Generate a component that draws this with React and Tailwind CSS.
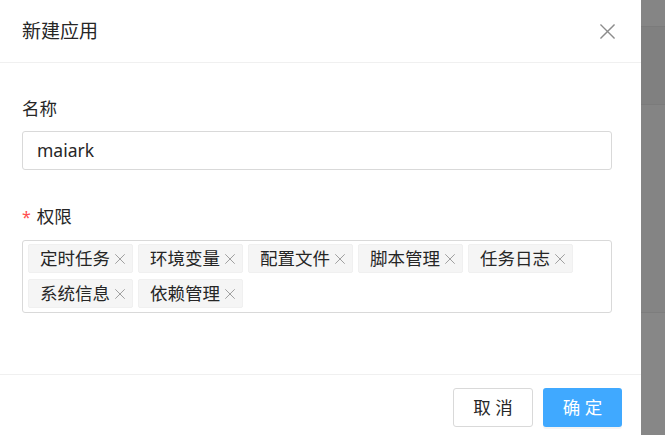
import React from "react";

const perms = ["定时任务", "环境变量", "配置文件", "脚本管理", "任务日志", "系统信息", "依赖管理"];

const font = { fontFamily: '"Noto Sans", "Noto Sans CJK SC", sans-serif' };

const CloseIcon = ({ size = 15, stroke = 1.5 }) => (
  <svg width={size} height={size} viewBox="0 0 16 16" fill="none">
    <path d="M1 1L15 15M15 1L1 15" stroke="#8c8c8c" strokeWidth={stroke} strokeLinecap="square" />
  </svg>
);

const Tag = ({ label }) => (
  <span className="flex items-center h-[29px] pl-[11px] pr-[7px] bg-[#f5f5f5] border border-[#f0f0f0] rounded-[2px] text-[17.5px] leading-none text-[#262626]">
    {label}
    <span className="ml-[5px] flex items-center">
      <CloseIcon size={10} stroke={1.3} />
    </span>
  </span>
);

const App = () => {
  return (
    <div className="flex w-[665px] h-[435px] overflow-hidden bg-white" style={font}>
      <div className="w-[641px] h-full flex flex-col bg-white">
        <div className="h-[63px] shrink-0 flex items-center justify-between pl-[22px] pr-[26px] border-b border-[#f0f0f0]">
          <span className="text-[19px] text-[#262626]">新建应用</span>
          <CloseIcon />
        </div>

        <div className="flex-1 px-[22px] pt-[32px]">
          <div className="h-[27px] flex items-center text-[17.5px] text-[#262626]">名称</div>
          <div className="mt-[9px] mr-[7px] h-[39px] flex items-center px-[14px] border border-[#d9d9d9] rounded-[3px] text-[17.5px] text-[#262626]">
            maiark
          </div>

          <div className="mt-[33px] h-[27px] flex items-center text-[17.5px] text-[#262626]">
            <span className="text-[#ff4d4f] mr-[6px] text-[16px]">*</span>
            权限
          </div>
          <div className="mt-[10px] mr-[7px] flex flex-wrap gap-x-[5px] gap-y-[6px] pl-[5px] pt-[3px] pb-[4px] border border-[#d9d9d9] rounded-[3px]">
            {perms.map((p) => (
              <Tag key={p} label={p} />
            ))}
          </div>
        </div>

        <div className="h-[61px] shrink-0 flex items-start justify-end gap-[10px] pt-[13px] pr-[19px] border-t border-[#f0f0f0]">
          <button className="w-[80px] h-[39px] border border-[#d9d9d9] rounded-[3px] bg-white text-[17.5px] text-[#262626]">
            取 消
          </button>
          <button className="w-[79px] h-[39px] rounded-[3px] bg-[#40a9ff] text-[17.5px] text-white shadow-[0_2px_0_rgba(0,0,0,0.045)]">
            确 定
          </button>
        </div>
      </div>

      <div className="flex-1 h-full flex flex-col bg-[#858585]">
        <div className="h-[27px] border-b border-[#7b7b7b]" />
        <div className="h-[78px] bg-[#808080] border-b border-[#7b7b7b]" />
        <div className="h-[208px] bg-[#848484] border-b border-[#7d7d7d]" />
        <div className="flex-1 bg-[#878787]" />
      </div>
    </div>
  );
};

export default App;
